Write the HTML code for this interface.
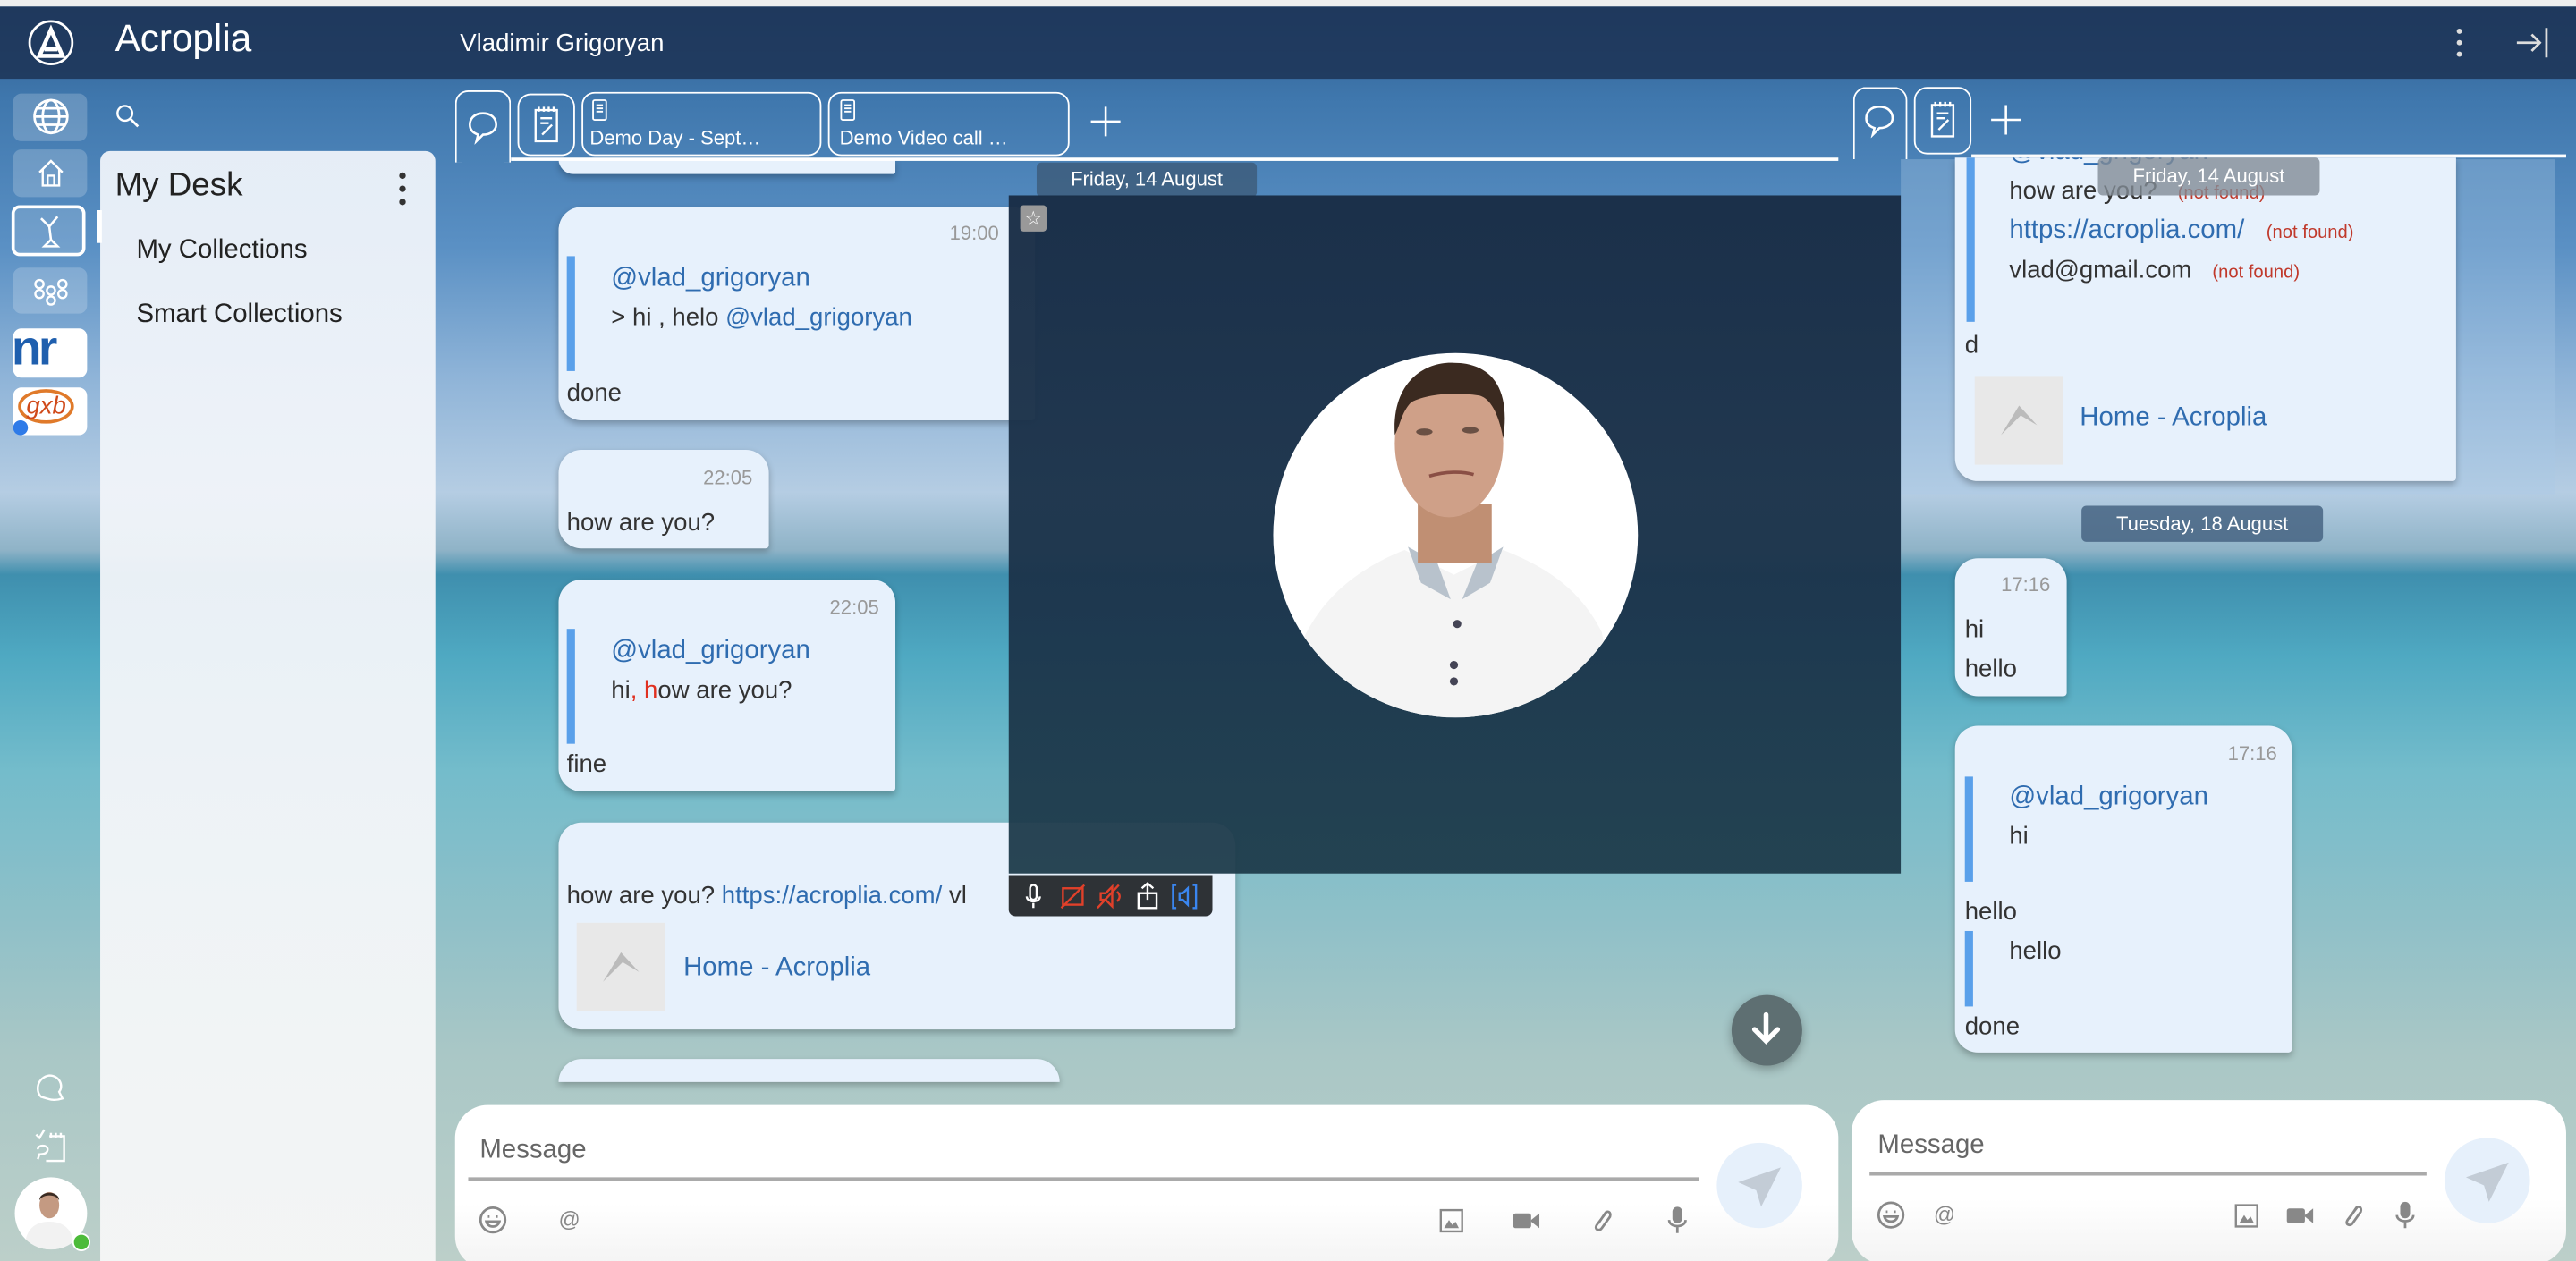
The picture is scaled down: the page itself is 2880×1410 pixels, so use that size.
<!DOCTYPE html>
<html><head><meta charset="utf-8">
<style>
html,body{margin:0;padding:0;width:2880px;height:1410px;overflow:hidden;background:#fff}
#s{position:absolute;left:0;top:0;width:1568px;height:768px;transform:scale(1.83673,1.83594);transform-origin:0 0;overflow:hidden;font-family:"Liberation Sans",sans-serif;
background:linear-gradient(180deg,#2e5b8c 0px,#3f77ad 60px,#5a90c4 150px,#8fb4d8 230px,#b5cde3 300px,#8fb3c7 335px,#3f8fae 350px,#4fa9c2 400px,#74bccb 470px,#8fc0c8 560px,#a9c7c6 640px,#bccfc9 768px)}
.a{position:absolute}
.w{color:#fff}
.b{position:absolute;background:#e7f1fc;border-radius:14px 14px 2px 14px;box-shadow:0 2px 4px rgba(0,0,0,.25);font-size:15px;color:#333}
.t{position:absolute;font-size:12px;color:#999}
.q{position:absolute;width:5px;background:#5aa0ea}
.m{color:#2f6cb0}
.nf{color:#c0392b;font-size:11px}
.chip{position:absolute;background:rgba(60,90,120,.8);color:#fff;font-size:12px;text-align:center;border-radius:3px}
.tab{position:absolute;border:1.5px solid #fff;border-radius:8px;box-sizing:border-box}
.ic{position:absolute;stroke:#888;fill:none;stroke-width:1.5}
</style></head><body>
<div id="s">
<div class="a" style="left:0;top:0;width:1568px;height:4px;background:#eee"></div>
<div class="a" style="left:0;top:4px;width:1568px;height:44px;background:rgba(28,50,85,.85)"></div>
<svg class="a" style="left:16px;top:11px" width="30" height="30" viewBox="0 0 30 30"><circle cx="15" cy="15" r="13" fill="none" stroke="#fff" stroke-width="1.5"/><path d="M8 23 L15 7 L22 23 Z M11 19 H19" fill="none" stroke="#fff" stroke-width="2.5"/></svg>
<div class="a w" style="left:70px;top:10px;font-size:23px">Acroplia</div>
<div class="a w" style="left:280px;top:18px;font-size:15px">Vladimir Grigoryan</div>
<svg class="a" style="left:1492px;top:16px" width="10" height="20"><circle cx="5" cy="3" r="1.6" fill="#ddd"/><circle cx="5" cy="10" r="1.6" fill="#ddd"/><circle cx="5" cy="17" r="1.6" fill="#ddd"/></svg>
<svg class="a" style="left:1530px;top:15px" width="22" height="22"><path d="M2 11 H16 M11 6 L16 11 L11 16 M20 2 V20" stroke="#ddd" stroke-width="1.5" fill="none"/></svg>
<div class="a" style="left:8px;top:57px;width:45px;height:29px;background:rgba(255,255,255,.2);border-radius:5px"></div>
<svg class="a" style="left:19px;top:59px" width="24" height="24" viewBox="0 0 24 24"><g fill="none" stroke="#fff" stroke-width="1.5"><circle cx="12" cy="12" r="10"/><ellipse cx="12" cy="12" rx="5" ry="10"/><path d="M2 12H22M4 7H20M4 17H20"/></g></svg>
<div class="a" style="left:8px;top:91px;width:45px;height:29px;background:rgba(255,255,255,.2);border-radius:5px"></div>
<svg class="a" style="left:21px;top:95px" width="20" height="20"><path d="M3 10 L10 3 L17 10 M5 8 V18 H15 V8 M8 18 V12 H12 V18" stroke="#fff" fill="none" stroke-width="1.3"/></svg>
<div class="a" style="left:7px;top:125px;width:45px;height:31px;border:2px solid #fff;border-radius:5px;box-sizing:border-box;background:rgba(255,255,255,.15)"></div>
<svg class="a" style="left:20px;top:128px" width="22" height="26"><path d="M5 5 L10 10 L15 4 M10 10 L11 18 M7 22 H15 L11 18 Z" stroke="#fff" fill="none" stroke-width="1.4"/></svg>
<div class="a" style="left:8px;top:163px;width:45px;height:28px;background:rgba(255,255,255,.2);border-radius:5px"></div>
<svg class="a" style="left:18px;top:165px" width="26" height="24"><g stroke="#fff" fill="none" stroke-width="1.3"><circle cx="6" cy="8" r="2.5"/><circle cx="20" cy="8" r="2.5"/><circle cx="13" cy="12" r="2.5"/><circle cx="6" cy="14" r="2.5"/><circle cx="20" cy="14" r="2.5"/><circle cx="13" cy="18" r="2.5"/></g></svg>
<div class="a" style="left:8px;top:200px;width:45px;height:30px;background:#fff;border-radius:5px;overflow:hidden"><div style="position:absolute;left:-1px;top:-4px;font-size:30px;font-weight:bold;color:#1f5fae;letter-spacing:-2px">nr</div></div>
<div class="a" style="left:8px;top:236px;width:45px;height:29px;background:#fff;border-radius:5px;overflow:hidden"><div style="position:absolute;left:3px;top:1px;font-size:15px;font-style:italic;color:#d04a1a;border:2px solid #e07a2a;border-radius:50%;padding:0 3px">gxb</div></div>
<div class="a" style="left:8px;top:256px;width:9px;height:9px;border-radius:50%;background:#2f7be8"></div>
<svg class="a" style="left:20px;top:652px" width="22" height="20"><path d="M5 16 C1 12 3 4 10 3 C16 3 19 9 16 13 L18 17 C12 19 9 17 5 16 Z" stroke="#fff" fill="none" stroke-width="1.3"/></svg>
<svg class="a" style="left:19px;top:686px" width="24" height="24"><path d="M3 5 L5 7 L8 2 M11 6 H20 V21 H9 M12 4 V7 M15 4 V7 M18 4 V7 M4 14 C4 11 10 11 10 14 C10 17 6 17 5 17 L4 20" stroke="#fff" fill="none" stroke-width="1.3"/></svg>
<div class="a" style="left:9px;top:717px;width:44px;height:44px;border-radius:50%;background:#fff;overflow:hidden">
<svg width="44" height="44"><ellipse cx="21" cy="17" rx="6" ry="8" fill="#c49a82"/><path d="M15 14 C15 8 27 8 27 14 C25 10 17 10 15 14Z" fill="#3a2b22"/><path d="M6 44 C6 30 14 27 21 27 C28 27 36 30 36 44Z" fill="#f2f2f2"/></svg></div>
<div class="a" style="left:44px;top:751px;width:9px;height:9px;border-radius:50%;background:#4cbb3a;border:1.5px solid #fff"></div>
<svg class="a" style="left:69px;top:62px" width="18" height="18"><circle cx="7" cy="7" r="4.5" stroke="#fff" fill="none" stroke-width="1.3"/><path d="M10 10 L15 15" stroke="#fff" stroke-width="1.5"/></svg>
<div class="a" style="left:61px;top:92px;width:204px;height:676px;background:linear-gradient(180deg,rgba(238,243,250,.95),rgba(245,246,246,.97));border-radius:6px 6px 0 0"></div>
<div class="a" style="left:59px;top:128px;width:3px;height:20px;background:#fff"></div>
<div class="a" style="left:70px;top:102px;font-size:20px;color:#222">My Desk</div>
<svg class="a" style="left:240px;top:104px" width="10" height="22"><circle cx="5" cy="3" r="2" fill="#333"/><circle cx="5" cy="11" r="2" fill="#333"/><circle cx="5" cy="19" r="2" fill="#333"/></svg>
<div class="a" style="left:83px;top:144px;font-size:16px;color:#222">My Collections</div>
<div class="a" style="left:83px;top:183px;font-size:16px;color:#222">Smart Collections</div>
<!-- left messages -->
<div class="b" style="left:340px;top:97px;width:205px;height:9px;border-radius:0 0 2px 14px"></div>
<div class="chip" style="left:631px;top:99px;width:134px;height:21px;line-height:21px">Friday, 14 August</div>
<div class="b" style="left:340px;top:126px;width:290px;height:130px">
<div class="t" style="left:238px;top:9px">19:00</div>
<div class="q" style="left:5px;top:30px;height:70px"></div>
<div class="a m" style="left:32px;top:35px;font-size:16px">@vlad_grigoryan</div>
<div class="a" style="left:32px;top:59px;font-size:15px">&gt; hi , helo <span class="m">@vlad_grigoryan</span></div>
<div class="a" style="left:5px;top:105px;font-size:15px">done</div></div>
<div class="b" style="left:340px;top:274px;width:128px;height:60px">
<div class="t" style="left:88px;top:10px">22:05</div>
<div class="a" style="left:5px;top:36px">how are you?</div></div>
<div class="b" style="left:340px;top:353px;width:205px;height:129px">
<div class="t" style="left:165px;top:10px">22:05</div>
<div class="q" style="left:5px;top:30px;height:70px"></div>
<div class="a m" style="left:32px;top:35px;font-size:16px">@vlad_grigoryan</div>
<div class="a" style="left:32px;top:59px">hi<span style="color:#e03020">, h</span>ow are you?</div>
<div class="a" style="left:5px;top:104px">fine</div></div>
<div class="b" style="left:340px;top:501px;width:412px;height:126px">
<div class="a" style="left:5px;top:36px;white-space:nowrap">how are you? <span class="m">https://acroplia.com/</span> vl</div>
<div class="a" style="left:11px;top:61px;width:54px;height:54px;background:#e8e8e8"><svg width="54" height="54"><path d="M16 36 L27 18 L38 30 L28 24 Z" fill="#bbb"/></svg></div>
<div class="a m" style="left:76px;top:80px;font-size:16px">Home - Acroplia</div></div>
<div class="b" style="left:340px;top:645px;width:305px;height:14px;border-radius:14px 14px 0 0"></div>
<!-- left tabs -->
<div class="tab" style="left:277px;top:55px;width:34px;height:44px;border-bottom:none;border-radius:8px 8px 0 0"></div>
<svg class="a" style="left:283px;top:66px" width="22" height="22"><path d="M11 3 C5 3 3 7 3 10 C3 13 5 15 8 16 L7 20 L11 16 C16 16 19 13 19 10 C19 6 16 3 11 3Z" stroke="#fff" fill="none" stroke-width="1.4"/></svg>
<div class="tab" style="left:315px;top:57px;width:35px;height:38px"></div>
<svg class="a" style="left:322px;top:62px" width="22" height="28"><path d="M4 5 H17 V24 H4 Z M6 3 V6 M9 3 V6 M12 3 V6 M15 3 V6 M7 10 H14 M7 13 H12 M8 20 L14 14" stroke="#fff" fill="none" stroke-width="1.3"/></svg>
<div class="tab" style="left:354px;top:56px;width:146px;height:39px"></div>
<svg class="a" style="left:360px;top:60px" width="10" height="14"><rect x="1" y="1" width="8" height="12" rx="1" stroke="#fff" fill="none"/><path d="M3 4H7M3 6H7M3 8H7" stroke="#fff"/></svg>
<div class="a w" style="left:359px;top:77px;font-size:12px">Demo Day - Sept…</div>
<div class="tab" style="left:504px;top:56px;width:147px;height:39px"></div>
<svg class="a" style="left:511px;top:60px" width="10" height="14"><rect x="1" y="1" width="8" height="12" rx="1" stroke="#fff" fill="none"/><path d="M3 4H7M3 6H7M3 8H7" stroke="#fff"/></svg>
<div class="a w" style="left:511px;top:77px;font-size:12px">Demo Video call …</div>
<svg class="a" style="left:663px;top:64px" width="20" height="20"><path d="M10 1V19M1 10H19" stroke="#fff" stroke-width="1.4"/></svg>
<div class="a" style="left:311px;top:96px;width:808px;height:1.5px;background:#fff"></div>
<!-- right panel -->
<div class="a" style="left:1157px;top:97px;width:398px;height:204px;background:rgba(170,200,230,.35)"></div>
<div class="tab" style="left:1128px;top:53px;width:33px;height:44px;border-bottom:none;border-radius:8px 8px 0 0"></div>
<svg class="a" style="left:1133px;top:62px" width="22" height="22"><path d="M11 3 C5 3 3 7 3 10 C3 13 5 15 8 16 L7 20 L11 16 C16 16 19 13 19 10 C19 6 16 3 11 3Z" stroke="#fff" fill="none" stroke-width="1.4"/></svg>
<div class="tab" style="left:1165px;top:53px;width:35px;height:41px"></div>
<svg class="a" style="left:1172px;top:59px" width="22" height="28"><path d="M4 5 H17 V24 H4 Z M6 3 V6 M9 3 V6 M12 3 V6 M15 3 V6 M7 10 H14 M7 13 H12 M8 20 L14 14" stroke="#fff" fill="none" stroke-width="1.3"/></svg>
<svg class="a" style="left:1211px;top:63px" width="20" height="20"><path d="M10 1V19M1 10H19" stroke="#fff" stroke-width="1.4"/></svg>
<div class="a" style="left:1200px;top:94px;width:362px;height:1.5px;background:#fff"></div>
<div class="b" style="left:1190px;top:96px;width:305px;height:197px;border-radius:0 0 2px 14px;overflow:hidden">
<div class="q" style="left:7px;top:0;height:100px"></div>
<div class="a m" style="left:33px;top:-12px;font-size:16px">@vlad_grigoryan</div>
<div class="a" style="left:33px;top:12px">how are you? &nbsp; <span class="nf">(not found)</span></div>
<div class="a" style="left:33px;top:36px;font-size:16px"><span class="m">https://acroplia.com/</span> &nbsp; <span class="nf">(not found)</span></div>
<div class="a" style="left:33px;top:60px">vlad@gmail.com &nbsp; <span class="nf">(not found)</span></div>
<div class="a" style="left:6px;top:106px">d</div>
<div class="a" style="left:12px;top:133px;width:54px;height:54px;background:#e8e8e8"><svg width="54" height="54"><path d="M16 36 L27 18 L38 30 L28 24 Z" fill="#bbb"/></svg></div>
<div class="a m" style="left:76px;top:150px;font-size:16px">Home - Acroplia</div></div>
<div class="chip" style="left:1277px;top:96px;width:135px;height:23px;line-height:23px;background:rgba(130,140,150,.8)">Friday, 14 August</div>
<div class="chip" style="left:1267px;top:308px;width:147px;height:22px;line-height:22px;background:rgba(70,100,130,.85)">Tuesday, 18 August</div>
<div class="b" style="left:1190px;top:340px;width:68px;height:84px">
<div class="t" style="left:28px;top:9px">17:16</div>
<div class="a" style="left:6px;top:35px">hi</div><div class="a" style="left:6px;top:59px">hello</div></div>
<div class="b" style="left:1190px;top:442px;width:205px;height:199px">
<div class="t" style="left:166px;top:10px">17:16</div>
<div class="q" style="left:6px;top:31px;height:64px"></div>
<div class="a m" style="left:33px;top:35px;font-size:16px">@vlad_grigoryan</div>
<div class="a" style="left:33px;top:59px">hi</div>
<div class="a" style="left:6px;top:105px">hello</div>
<div class="q" style="left:6px;top:125px;height:46px"></div>
<div class="a" style="left:33px;top:129px">hello</div>
<div class="a" style="left:6px;top:175px">done</div></div>
<!-- video overlay -->
<div class="a" style="left:614px;top:119px;width:543px;height:413px;background:linear-gradient(180deg,rgba(25,45,70,.97),rgba(28,52,75,.96) 60%,rgba(30,60,75,.95))"></div>
<div class="a" style="left:621px;top:125px;width:16px;height:16px;background:#999;border-radius:2px;color:#fff;font-size:12px;text-align:center;line-height:16px">☆</div>
<div class="a" style="left:775px;top:215px;width:222px;height:222px;border-radius:50%;background:#fff;overflow:hidden">
<svg width="222" height="222" viewBox="0 0 222 222">
<path d="M10 200 C20 150 55 130 80 120 L110 135 L140 120 C160 128 185 140 200 170 L210 222 H10 Z" fill="#f4f4f4"/>
<path d="M82 118 L90 140 L108 150 L100 128 Z M140 118 L132 140 L115 150 L124 128Z" fill="#b8c2cc"/>
<rect x="88" y="92" width="45" height="36" fill="#c08f73"/>
<ellipse cx="107" cy="55" rx="33" ry="45" fill="#cfa088"/>
<path d="M74 50 C72 15 95 5 110 6 C130 6 145 18 140 52 C137 36 132 28 126 26 C115 24 95 24 84 30 C78 36 77 45 74 50Z" fill="#3b2a20"/>
<ellipse cx="92" cy="48" rx="5" ry="2" fill="#6a5044"/><ellipse cx="120" cy="47" rx="5" ry="2" fill="#6a5044"/>
<path d="M95 75 C105 72 115 72 122 74" stroke="#8a4f45" stroke-width="2" fill="none"/>
<circle cx="112" cy="165" r="2.5" fill="#445"/><circle cx="110" cy="190" r="2.5" fill="#445"/><circle cx="110" cy="200" r="2.5" fill="#445"/></svg></div>
<div class="a" style="left:614px;top:533px;width:124px;height:25px;background:#2e3236;border-radius:0 0 4px 4px"></div>
<svg class="a" style="left:620px;top:537px" width="116" height="18"><g fill="none" stroke-width="1.3">
<rect x="7" y="2" width="4" height="9" rx="2" stroke="#fff"/><path d="M5 9 C5 13 13 13 13 9 M9 13 V16" stroke="#fff"/>
<rect x="27" y="4" width="12" height="10" stroke="#e0402a"/><path d="M26 16 L40 2" stroke="#e0402a"/>
<path d="M50 7 H53 L57 3 V15 L53 11 H50 Z M60 6 C62 8 62 10 60 12 M48 16 L61 2" stroke="#e0402a"/>
<rect x="73" y="7" width="11" height="9" stroke="#fff"/><path d="M78.5 1 V11 M75 4 L78.5 1 L82 4" stroke="#fff"/>
<path d="M96 2 H94 V16 H96 M106 2 H108 V16 H106 M98 7 H100 L103 4 V14 L100 11 H98Z" stroke="#3a86f0"/></g></svg>
<div class="a" style="left:1054px;top:606px;width:43px;height:43px;border-radius:50%;background:#5e6f72;box-shadow:0 2px 6px rgba(0,0,0,.3)"></div>
<svg class="a" style="left:1064px;top:616px" width="22" height="22"><path d="M11 2 V18 M4 11 L11 18 L18 11" stroke="#fff" stroke-width="3" fill="none" stroke-linecap="round"/></svg>
<!-- left input -->
<div class="a" style="left:277px;top:673px;width:842px;height:100px;background:linear-gradient(180deg,#fff 60%,#f3f3f3);border-radius:20px"></div>
<div class="a" style="left:292px;top:692px;font-size:16px;color:#666">Message</div>
<div class="a" style="left:285px;top:717px;width:749px;height:1.5px;background:#aaa"></div>
<div class="a" style="left:1045px;top:696px;width:52px;height:52px;border-radius:50%;background:#e6f0fb"></div>
<svg class="a" style="left:1055px;top:708px" width="32" height="30"><path d="M3 12 L29 3 L17 27 L14 17 Z" fill="#c3ccd6"/></svg>
<svg class="ic" style="left:291px;top:734px" width="18" height="18"><circle cx="9" cy="9" r="7.5"/><path d="M5 10 C6 14 12 14 13 10Z"/><path d="M6 7H7M11 7H12"/></svg>
<div class="a" style="left:340px;top:735px;font-size:13px;color:#888">@</div>
<svg class="a" style="left:876px;top:736px" width="15" height="15"><rect x="1" y="1" width="13" height="13" stroke="#888" fill="none" stroke-width="1.3"/><path d="M3 12 L6 7 L8 10 L10 8 L12 12Z" fill="#888"/></svg>
<svg class="a" style="left:920px;top:737px" width="18" height="13"><rect x="1" y="2" width="11" height="9" rx="1.5" fill="#888"/><path d="M12 6 L17 2 V11 L12 7Z" fill="#888"/></svg>
<svg class="ic" style="left:968px;top:735px" width="14" height="16"><path d="M10 3 L4 11 C2 14 6 15 7 13 L12 6 C13 3 10 2 9 4 L5 10"/></svg>
<svg class="ic" style="left:1015px;top:734px" width="12" height="18"><rect x="3" y="1" width="6" height="10" rx="3" fill="#888" stroke="none"/><path d="M1 9 C1 14 11 14 11 9 M6 13 V17"/></svg>
<!-- right input -->
<div class="a" style="left:1127px;top:670px;width:435px;height:100px;background:linear-gradient(180deg,#fff 60%,#f3f3f3);border-radius:20px"></div>
<div class="a" style="left:1143px;top:689px;font-size:16px;color:#666">Message</div>
<div class="a" style="left:1138px;top:714px;width:339px;height:1.5px;background:#aaa"></div>
<div class="a" style="left:1488px;top:693px;width:52px;height:52px;border-radius:50%;background:#e6f0fb"></div>
<svg class="a" style="left:1498px;top:705px" width="32" height="30"><path d="M3 12 L29 3 L17 27 L14 17 Z" fill="#c3ccd6"/></svg>
<svg class="ic" style="left:1142px;top:731px" width="18" height="18"><circle cx="9" cy="9" r="7.5"/><path d="M5 10 C6 14 12 14 13 10Z"/><path d="M6 7H7M11 7H12"/></svg>
<div class="a" style="left:1177px;top:732px;font-size:13px;color:#888">@</div>
<svg class="a" style="left:1360px;top:733px" width="15" height="15"><rect x="1" y="1" width="13" height="13" stroke="#888" fill="none" stroke-width="1.3"/><path d="M3 12 L6 7 L8 10 L10 8 L12 12Z" fill="#888"/></svg>
<svg class="a" style="left:1391px;top:734px" width="18" height="13"><rect x="1" y="2" width="11" height="9" rx="1.5" fill="#888"/><path d="M12 6 L17 2 V11 L12 7Z" fill="#888"/></svg>
<svg class="ic" style="left:1425px;top:732px" width="14" height="16"><path d="M10 3 L4 11 C2 14 6 15 7 13 L12 6 C13 3 10 2 9 4 L5 10"/></svg>
<svg class="ic" style="left:1458px;top:731px" width="12" height="18"><rect x="3" y="1" width="6" height="10" rx="3" fill="#888" stroke="none"/><path d="M1 9 C1 14 11 14 11 9 M6 13 V17"/></svg>
</div>
</body></html>
